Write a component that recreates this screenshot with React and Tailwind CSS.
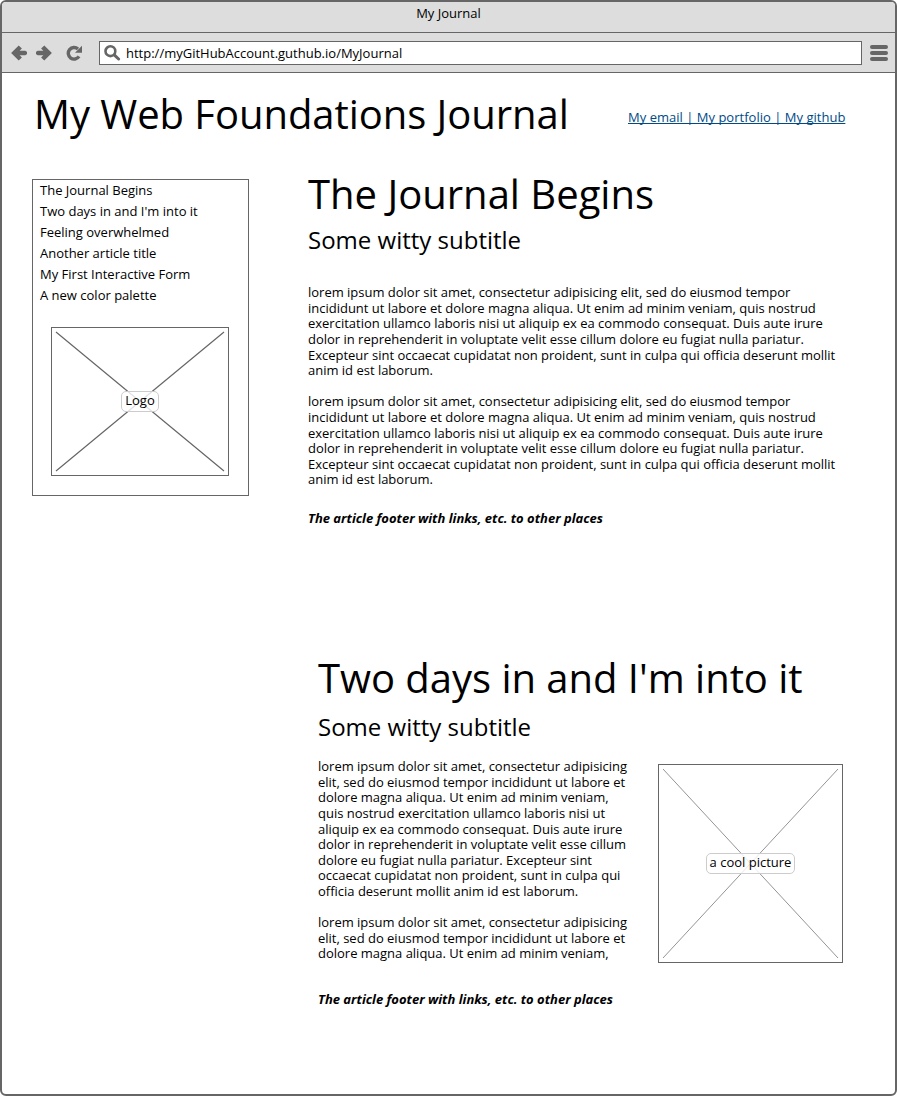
const LOREM_WIDE = [
  "lorem ipsum dolor sit amet, consectetur adipisicing elit, sed do eiusmod tempor",
  "incididunt ut labore et dolore magna aliqua. Ut enim ad minim veniam, quis nostrud",
  "exercitation ullamco laboris nisi ut aliquip ex ea commodo consequat. Duis aute irure",
  "dolor in reprehenderit in voluptate velit esse cillum dolore eu fugiat nulla pariatur.",
  "Excepteur sint occaecat cupidatat non proident, sunt in culpa qui officia deserunt mollit",
  "anim id est laborum.",
];

const LOREM_NARROW = [
  "lorem ipsum dolor sit amet, consectetur adipisicing",
  "elit, sed do eiusmod tempor incididunt ut labore et",
  "dolore magna aliqua. Ut enim ad minim veniam,",
  "quis nostrud exercitation ullamco laboris nisi ut",
  "aliquip ex ea commodo consequat. Duis aute irure",
  "dolor in reprehenderit in voluptate velit esse cillum",
  "dolore eu fugiat nulla pariatur. Excepteur sint",
  "occaecat cupidatat non proident, sunt in culpa qui",
  "officia deserunt mollit anim id est laborum.",
];

const NAV = [
  "The Journal Begins",
  "Two days in and I'm into it",
  "Feeling overwhelmed",
  "Another article title",
  "My First Interactive Form",
  "A new color palette",
];

function Paragraph({ lines }) {
  return (
    <p className="mb-[15.6px] whitespace-nowrap leading-[15.6px] tracking-[-0.01px]">
      {lines.map((line) => (
        <span key={line} className="block">{line}</span>
      ))}
    </p>
  );
}

function ArrowIcon({ className = "" }) {
  return (
    <svg className={className} width="16" height="16" viewBox="0 0 16 16" fill="none" stroke="#666" strokeWidth="4.5">
      <path d="M9.3 2 3.3 8l6 6M3.5 8h11" />
      <path d="M13.9 8h.2" strokeLinecap="round" strokeWidth="4" />
    </svg>
  );
}

function Placeholder({ width, height, label, stroke, className }) {
  return (
    <div className={`relative flex items-center justify-center border border-[#666] ${className}`}>
      <svg className="absolute inset-0" width={width - 2} height={height - 2} stroke="#666" strokeWidth={stroke}>
        <path d={`M4 4 ${width - 6} ${height - 6}M${width - 6} 4 4 ${height - 6}`} />
      </svg>
      <span className="relative flex h-[21px] items-center rounded-[5px] border border-[#ccc] bg-white/80 px-[3px] leading-[19px]">
        <span className="mb-[2px]">{label}</span>
      </span>
    </div>
  );
}

export default function App() {
  return (
    <div className="flex h-[1096px] w-[897px] flex-col overflow-hidden rounded-[6px] border-2 border-[#666] bg-white font-['Open_Sans',sans-serif] text-[13px] text-black">
      <div className="h-[31px] shrink-0 border-b border-[#666] bg-[#ddd] pt-[2px] text-center leading-[18px]">My Journal</div>
      <div className="flex h-10 shrink-0 items-start border-b border-[#666] bg-[#ddd] pl-[9px] pt-2">
        <ArrowIcon className="mt-[3.5px]" />
        <ArrowIcon className="ml-[9px] mt-[3.5px] rotate-180" />
        <svg className="ml-[14px] mt-[3.5px]" width="16" height="16" viewBox="0 0 16 16" fill="none">
          <path d="M12 4A5.8 5.8 0 1 0 13 11.4" stroke="#666" strokeWidth="3.4" />
          <path d="M16 .8v6.9H9z" fill="#666" />
        </svg>
        <div className="ml-[17px] flex h-6 w-[763px] items-center border border-[#666] bg-white pl-1">
          <svg width="17" height="16" viewBox="0 0 17 16" fill="none" stroke="#666">
            <circle cx="6.4" cy="6.2" r="4.9" strokeWidth="2.6" />
            <path d="m10.2 9.8 4.4 4.2" strokeWidth="3" strokeLinecap="round" />
          </svg>
          <span className="ml-[5px] leading-[18px]">http://myGitHubAccount.guthub.io/MyJournal</span>
        </div>
        <div className="ml-2 mt-1 flex flex-col gap-[2px]">
          <span className="h-1 w-[18px] rounded-full bg-[#666]" />
          <span className="h-1 w-[18px] rounded-full bg-[#666]" />
          <span className="h-1 w-[18px] rounded-full bg-[#666]" />
        </div>
      </div>
      <header className="flex h-[106px] shrink-0 pl-8 pt-[17px]">
        <h1 className="w-[594px] whitespace-nowrap text-[40px] leading-[48px] tracking-[-0.05px]">My Web Foundations Journal</h1>
        <a className="mt-[18px] whitespace-nowrap leading-[18px] tracking-[0.015px] text-[#004a86] underline [text-decoration-skip-ink:none]">My email | My portfolio | My github</a>
      </header>
      <div className="flex items-start pl-[30px]">
        <nav className="h-[317px] w-[217px] shrink-0 border border-[#666]">
          <ul className="pl-[7px] leading-[21px]">
            {NAV.map((item) => (
              <li key={item}>{item}</li>
            ))}
          </ul>
          <Placeholder width={178} height={149} label="Logo" stroke={1.2} className="ml-[18px] mt-[21px] h-[149px] w-[178px]" />
        </nav>
        <main className="-mt-[9px] ml-[59px] flex flex-col">
          <article className="h-[484px]">
            <h2 className="whitespace-nowrap text-[40px] leading-[48px]">The Journal Begins</h2>
            <h3 className="mt-[7px] text-[24px] leading-[29px]">Some witty subtitle</h3>
            <div className="mt-[31.2px] h-[225px]">
              <Paragraph lines={LOREM_WIDE} />
              <Paragraph lines={LOREM_WIDE} />
            </div>
            <footer className="font-bold italic leading-[16px]">The article footer with links, etc. to other places</footer>
          </article>
          <article className="ml-[10px]">
            <h2 className="whitespace-nowrap text-[40px] leading-[48px] tracking-[-0.03px]">Two days in and I'm into it</h2>
            <h3 className="mt-[10px] text-[24px] leading-[29px]">Some witty subtitle</h3>
            <div className="mt-[17px] flex h-[233px] items-start">
              <div className="w-[340px] pt-[1.2px]">
                <Paragraph lines={LOREM_NARROW} />
                <Paragraph lines={LOREM_NARROW.slice(0, 3)} />
              </div>
              <Placeholder width={185} height={199} label="a cool picture" stroke={0.7} className="mt-[6px] h-[199px] w-[185px]" />
            </div>
            <footer className="font-bold italic leading-[16px]">The article footer with links, etc. to other places</footer>
          </article>
        </main>
      </div>
    </div>
  );
}
